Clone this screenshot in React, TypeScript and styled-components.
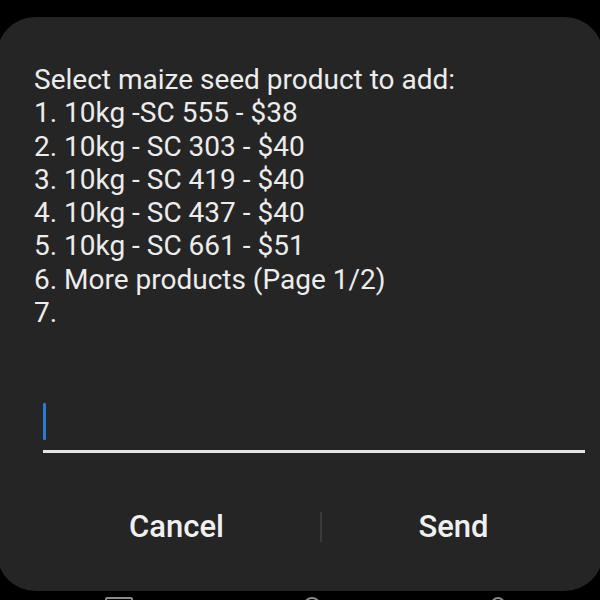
import React from "react";
import styled, { createGlobalStyle } from "styled-components";

const Global = createGlobalStyle`
  html, body { margin: 0; padding: 0; background: #000; }
  body { width: 600px; height: 600px; overflow: hidden; font-family: Roboto, "Liberation Sans", sans-serif; }
`;

const Screen = styled.div`
  width: 600px;
  height: 600px;
  background: #000;
  overflow: hidden;
  padding-top: 17px;
  box-sizing: border-box;
`;

const Dialog = styled.div`
  margin-left: -3px;
  width: 606px;
  height: 574px;
  background: #252525;
  border-radius: 38px;
  display: flex;
  flex-direction: column;
  box-sizing: border-box;
  padding: 46px 18px 0 37px;
`;

const Message = styled.div`
  color: #ececec;
  font-size: 28px;
  line-height: 33.3px;
  white-space: pre;
`;

const InputArea = styled.div`
  margin-top: 74px;
  margin-left: 9px;
  height: 47px;
  border-bottom: 3px solid #e6e6e6;
  display: flex;
  align-items: flex-start;
`;

const Caret = styled.div`
  width: 3px;
  height: 37px;
  background: #2b78d6;
  border-radius: 1px;
`;

const Actions = styled.div`
  display: grid;
  grid-template-columns: 287px 2px 1fr;
  align-items: center;
  margin-top: 55px;
  margin-left: -1px;
`;

const ActionButton = styled.div`
  text-align: center;
  color: #f0f0f0;
  font-size: 31px;
  font-weight: 500;
`;

const Divider = styled.div`
  width: 2px;
  height: 30px;
  background: #3a3a3a;
`;

const NavBar = styled.div`
  display: flex;
  justify-content: space-between;
  margin: 6px 0 0 105px;
  width: 400px;
`;

const NavIcon = styled.div<{ $w: number; $round?: boolean }>`
  width: ${(p) => p.$w}px;
  height: 14px;
  border: 2px solid #8a8a8a;
  border-radius: ${(p) => (p.$round ? "50%" : "2px")};
  box-sizing: border-box;
`;

const lines = [
  "Select maize seed product to add:",
  "1. 10kg -SC 555 - $38",
  "2. 10kg - SC 303 - $40",
  "3. 10kg - SC 419 - $40",
  "4. 10kg - SC 437 - $40",
  "5. 10kg - SC 661 - $51",
  "6. More products (Page 1/2)",
  "7.",
];

export default function App() {
  return (
    <Screen>
      <Global />
      <Dialog>
        <Message>{lines.join("\n")}</Message>
        <InputArea>
          <Caret />
        </InputArea>
        <Actions>
          <ActionButton>Cancel</ActionButton>
          <Divider />
          <ActionButton>Send</ActionButton>
        </Actions>
      </Dialog>
      <NavBar>
        <NavIcon $w={28} />
        <NavIcon $w={16} $round />
        <NavIcon $w={14} $round />
      </NavBar>
    </Screen>
  );
}
